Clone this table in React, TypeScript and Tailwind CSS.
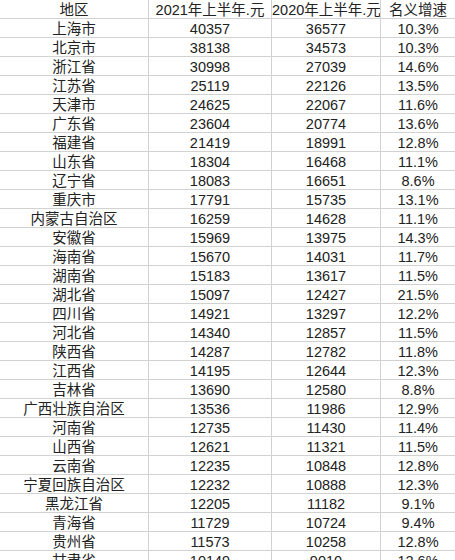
const rows: [string, string, string, string][] = [
  ["上海市", "40357", "36577", "10.3%"],
  ["北京市", "38138", "34573", "10.3%"],
  ["浙江省", "30998", "27039", "14.6%"],
  ["江苏省", "25119", "22126", "13.5%"],
  ["天津市", "24625", "22067", "11.6%"],
  ["广东省", "23604", "20774", "13.6%"],
  ["福建省", "21419", "18991", "12.8%"],
  ["山东省", "18304", "16468", "11.1%"],
  ["辽宁省", "18083", "16651", "8.6%"],
  ["重庆市", "17791", "15735", "13.1%"],
  ["内蒙古自治区", "16259", "14628", "11.1%"],
  ["安徽省", "15969", "13975", "14.3%"],
  ["海南省", "15670", "14031", "11.7%"],
  ["湖南省", "15183", "13617", "11.5%"],
  ["湖北省", "15097", "12427", "21.5%"],
  ["四川省", "14921", "13297", "12.2%"],
  ["河北省", "14340", "12857", "11.5%"],
  ["陕西省", "14287", "12782", "11.8%"],
  ["江西省", "14195", "12644", "12.3%"],
  ["吉林省", "13690", "12580", "8.8%"],
  ["广西壮族自治区", "13536", "11986", "12.9%"],
  ["河南省", "12735", "11430", "11.4%"],
  ["山西省", "12621", "11321", "11.5%"],
  ["云南省", "12235", "10848", "12.8%"],
  ["宁夏回族自治区", "12232", "10888", "12.3%"],
  ["黑龙江省", "12205", "11182", "9.1%"],
  ["青海省", "11729", "10724", "9.4%"],
  ["贵州省", "11573", "10258", "12.8%"],
  ["甘肃省", "10149", "9010", "12.6%"],
];

const header: [string, string, string, string] = ["地区", "2021年上半年.元", "2020年上半年.元", "名义增速"];

// one spreadsheet row: four cells, thin grey grid lines
const Row = ({ cells }: { cells: [string, string, string, string] }) => (
  <>
    {cells.map((c, i) => (
      <div
        key={i}
        className={
          "h-[19px] border-b border-[#d2d2d2] text-center leading-[21px] whitespace-nowrap overflow-hidden " +
          (i < 3 ? "border-r" : "")
        }
      >
        {c}
      </div>
    ))}
  </>
);

export default function App() {
  return (
    <div
      className="h-[560px] w-[455px] overflow-hidden bg-white text-[14.5px] text-[#222]"
      style={{ fontFamily: '"Liberation Sans", "Noto Sans CJK SC", sans-serif' }}
    >
      <div className="grid grid-cols-[149px_123px_109px_74px]">
        <Row cells={header} />
        {rows.map((r) => (
          <Row key={r[0]} cells={r} />
        ))}
      </div>
    </div>
  );
}
